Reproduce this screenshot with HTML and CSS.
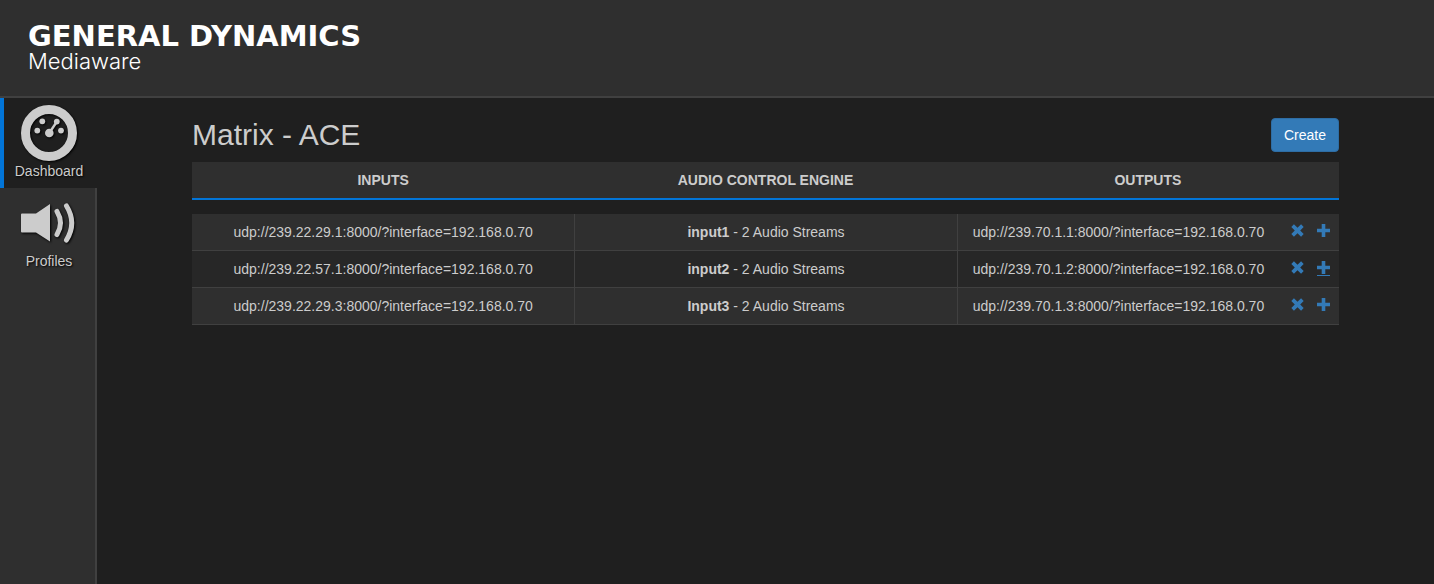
FILE: index.html
```html
<!DOCTYPE html>
<html lang="en">
<head>
<meta charset="utf-8">
<title>Matrix - ACE</title>
<link rel="stylesheet" href="styles.css">
</head>
<body>
<svg class="sprite" aria-hidden="true">
  <symbol id="remove" viewBox="0 0 12 12"><path d="M2.7 .3 6 3.5 9.3 .3 11.7 2.7 8.5 6 11.7 9.3 9.3 11.7 6 8.500 2.7 11.7 .3 9.3 3.5 6 .3 2.7z"/></symbol>
  <symbol id="plus" viewBox="0 0 13 13"><path d="M4.700 0h3.600v4.700H13v3.600H8.300V13H4.700V8.300H0V4.700h4.700z"/></symbol>
</svg>
<header class="header">
  <div class="brand">GENERAL DYNAMICS</div>
  <div class="division">Mediaware</div>
</header>
<div class="layout">
  <nav class="sidebar">
    <a class="nav-item active" href="#dashboard">
      <svg class="nav-icon" viewBox="0 0 56 56" aria-hidden="true">
        <circle cx="28" cy="28" r="23.5" fill="none" stroke="currentColor" stroke-width="9"/>
        <g fill="currentColor"><circle cx="16.3" cy="25.6" r="2.9"/><circle cx="21.3" cy="16.3" r="2.9"/><circle cx="35.8" cy="16.6" r="2.9"/><circle cx="40" cy="25.6" r="2.9"/><circle cx="28.3" cy="28" r="4.3"/></g>
        <path d="M28.3 28 35.6 17" stroke="currentColor" stroke-width="2.4"/>
      </svg>
      <span>Dashboard</span>
    </a>
    <a class="nav-item" href="#profiles">
      <svg class="nav-icon" viewBox="0 0 56 56" aria-hidden="true">
        <path d="M1 18.5h14L29 9v37.500L15 37.500H1q-1 0-1-1v-17q0-1 1-1z" fill="currentColor"/>
        <path d="M36 16.500Q43 28 36 39.500M45.500 11Q56 28 45.500 45" fill="none" stroke="currentColor" stroke-width="5" stroke-linecap="round"/>
      </svg>
      <span>Profiles</span>
    </a>
  </nav>
  <main class="content">
    <div class="title-row">
      <h1>Matrix - ACE</h1>
      <button class="create" type="button">Create</button>
    </div>
    <table class="matrix">
      <thead><tr><th scope="col">INPUTS</th><th scope="col">AUDIO CONTROL ENGINE</th><th scope="col">OUTPUTS</th></tr></thead>
      <tbody>
        <tr>
          <td>udp://239.22.29.1:8000/?interface=192.168.0.70</td>
          <td><b>input1</b> - 2 Audio Streams</td>
          <td><div class="output"><span>udp://239.70.1.1:8000/?interface=192.168.0.70</span><span class="actions"><a href="#remove1" aria-label="Remove"><svg><use href="#remove"/></svg></a><a href="#add1" aria-label="Add"><svg><use href="#plus"/></svg></a></span></div></td>
        </tr>
        <tr>
          <td>udp://239.22.57.1:8000/?interface=192.168.0.70</td>
          <td><b>input2</b> - 2 Audio Streams</td>
          <td><div class="output"><span>udp://239.70.1.2:8000/?interface=192.168.0.70</span><span class="actions"><a href="#remove2" aria-label="Remove"><svg><use href="#remove"/></svg></a><a class="underlined" href="#add2" aria-label="Add"><svg><use href="#plus"/></svg></a></span></div></td>
        </tr>
        <tr>
          <td>udp://239.22.29.3:8000/?interface=192.168.0.70</td>
          <td><b>Input3</b> - 2 Audio Streams</td>
          <td><div class="output"><span>udp://239.70.1.3:8000/?interface=192.168.0.70</span><span class="actions"><a href="#remove3" aria-label="Remove"><svg><use href="#remove"/></svg></a><a href="#add3" aria-label="Add"><svg><use href="#plus"/></svg></a></span></div></td>
        </tr>
      </tbody>
    </table>
  </main>
</div>
</body>
</html>
```

FILE: styles.css
```css
* { box-sizing: border-box; }
body {
  margin: 0;
  min-height: 100vh;
  display: flex;
  flex-direction: column;
  background: #1f1f1f;
  color: #ccc;
  font: 14px/20px "Liberation Sans", Arial, sans-serif;
}
.sprite { display: none; }
.header {
  padding: 22px 28px 24px;
  background: #2f2f2f;
  border-bottom: 2px solid #404040;
  color: #fff;
}
.brand { font: bold 29px/28px "DejaVu Sans", sans-serif; }
.division { font: 300 22px/22px Inter, sans-serif; }
.layout { flex: 1; display: flex; }
.sidebar {
  flex: none;
  width: 97px;
  background: #2f2f2f;
  display: flex;
  flex-direction: column;
}
.sidebar::after { content: ""; flex: 1; border-right: 2px solid #404040; }
.nav-item {
  height: 90px;
  padding: 7px 0 0 3px;
  display: flex;
  flex-direction: column;
  align-items: center;
  border-right: 2px solid #404040;
  color: #ccc;
  text-decoration: none;
  text-shadow: 1px 1px 2px #000;
}
.nav-item.active {
  padding: 7px 1px 0 0;
  background: #1f1f1f;
  border-left: 4px solid #0275d8;
  border-right-color: #1f1f1f;
}
.nav-icon { width: 56px; height: 56px; overflow: visible; filter: drop-shadow(1px 1px 1px #000); }
.content { flex: 1; padding: 20px 95px; }
.title-row { display: flex; justify-content: space-between; align-items: center; margin-bottom: 10px; }
h1 { margin: 0; font-size: 30px; line-height: 34px; font-weight: normal; }
.create {
  padding: 6px 12px;
  background: #337ab7;
  border: 1px solid #2e6da4;
  border-radius: 4px;
  color: #fff;
  font: inherit;
}
.matrix { width: 100%; table-layout: fixed; border-spacing: 0; text-align: center; }
th { padding: 8px; background: #2f2f2f; border-bottom: 2px solid #0275d8; }
tbody::before { content: ""; display: block; height: 14px; }
td { padding: 8px 0; background: #2f2f2f; border-bottom: 1px solid #404040; }
td + td { border-left: 1px solid #404040; }
tr:nth-child(even) td { background: #272727; }
.output { display: flex; justify-content: space-between; padding: 0 9px 0 15px; }
.actions { display: flex; gap: 13px; padding-top: 2px; }
.actions a { height: 15px; color: #337ab7; }
.actions svg { display: block; width: 13px; height: 13px; fill: currentColor; }
.actions .underlined { border-bottom: 1px solid #337ab7; }
```
